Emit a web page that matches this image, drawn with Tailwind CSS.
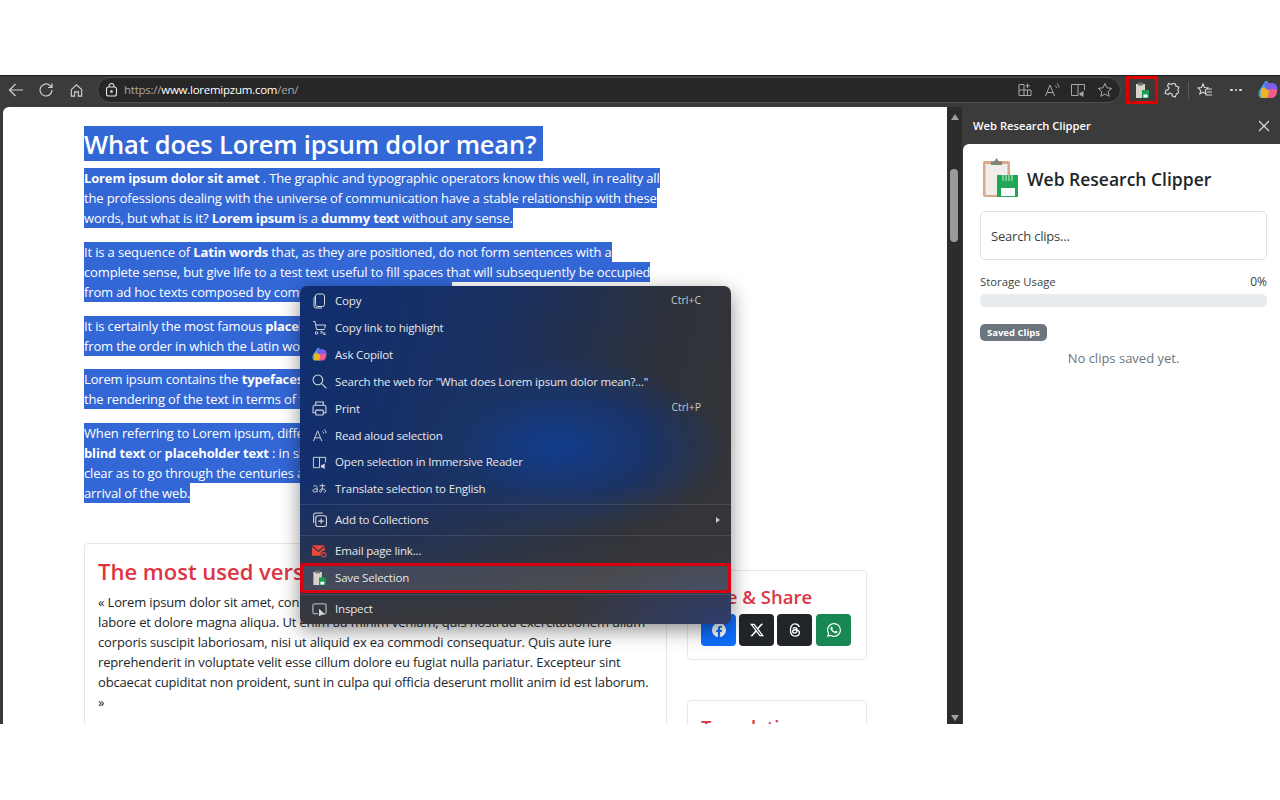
<!DOCTYPE html>
<html lang="en">
<head>
  <meta charset="UTF-8">
  <title>Web Research Clipper</title>
  <script src="https://cdn.jsdelivr.net/npm/@tailwindcss/browser@4"></script>
</head>
<body class="bg-white font-['Open_Sans','Noto_Sans',sans-serif] h-[800px] overflow-hidden">

  <!-- browser window -->
  <div class="mt-[75px] h-[649px] bg-[#3b3b3b] flex flex-col relative overflow-hidden">

    <!-- toolbar -->
    <div class="h-[32px] shrink-0 flex items-center pb-[3px] border-t border-[#1c1c1c] text-[#d0d0d0]">
      <div class="w-[97px] flex items-center pl-[8px] shrink-0">
        <svg class="w-[16px] h-[16px]" viewBox="0 0 16 16" fill="none" stroke="currentColor" stroke-width="1.2"><path d="M15 8H1.500M7.500 2 1.500 8l6 6"/></svg>
        <svg class="w-[16px] h-[16px] ml-[14px]" viewBox="0 0 16 16" fill="none" stroke="currentColor" stroke-width="1.2"><path d="M14 8a6 6 0 1 1-2-4.500L14 5.500M14 1.500v4h-4"/></svg>
        <svg class="w-[15px] h-[15px] ml-[15px]" viewBox="0 0 16 16" fill="none" stroke="currentColor" stroke-width="1.2"><path d="M2.500 7 8 2l5.500 5v7H10V9.500H6V14H2.500z"/></svg>
      </div>
      <div class="w-[1024px] h-[26px] rounded-full bg-[#272727] border border-[#4f4f4f] flex items-center pl-[7px] pr-[7px] shrink-0">
        <svg class="w-[13px] h-[14px] mr-[6px]" viewBox="0 0 13 14" fill="none" stroke="#e0e0e0" stroke-width="1.100"><rect x="1.500" y="4" width="10" height="9" rx="2"/><path d="M4 4V3a2.500 2.500 0 0 1 5 0v1"/><circle cx="6.500" cy="8.500" r=".8" fill="#e0e0e0"/></svg>
        <span class="text-[11.500px] text-[#a8a8a8] tracking-[-0.25px]">https://<span class="text-white">www.loremipzum.com</span>/en/</span>
        <div class="ml-auto flex items-center gap-[10.700px] text-[#a8a8a8]">
          <svg class="w-[16px] h-[16px]" viewBox="0 0 16 16" fill="none" stroke="currentColor"><path d="M2 2.500h5v11H2zM7 8H14v5.500H7M2 8h5M10.500 8v5.500M10.500 1.500V6M8.500 3.800h4.500"/></svg>
          <svg class="w-[16px] h-[16px]" viewBox="0 0 16 16" fill="none" stroke="currentColor"><path d="M1.500 14 6 3l4.500 11M3 10.500h6M11 3.500c1 .6 1.500 1.500 1.500 2.500M13 1.500c1.300 1 2 2.500 2 4"/></svg>
          <svg class="w-[16px] h-[16px]" viewBox="0 0 16 16" fill="none" stroke="currentColor"><path d="M8 13.500H1.500v-11h13V8M8 2.500v11"/><path d="M10 11h1.500l1.500-1.500v5L11.500 13H10z" fill="currentColor"/></svg>
          <svg class="w-[16px] h-[16px]" viewBox="0 0 16 16" fill="none" stroke="currentColor"><path d="m8 1.500 2 4.300 4.700.6-3.500 3.200.9 4.700L8 12l-4.100 2.300.9-4.700L1.300 6.400 6 5.800z"/></svg>
        </div>
      </div>
      <div class="w-[32px] h-[28px] ml-[5px] border-[3px] border-[#e00000] flex items-center justify-center shrink-0">
        <svg class="w-[15px] h-[17px]" viewBox="0 0 15 17"><rect x="1" y="2" width="9" height="14" fill="#d8d2c8"/><rect x="3" y="0.500" width="5" height="3" fill="#6f6f6f"/><path d="M7 8h7v8H7z" fill="#1f9d55"/><rect x="8.500" y="12.500" width="4" height="3" fill="#fff"/></svg>
      </div>
      <div class="flex items-center ml-[6px] text-[#d8d8d8]">
        <svg class="w-[16px] h-[16px]" viewBox="0 0 16 16" fill="none" stroke="currentColor" stroke-width="1.100"><path d="M6 3a2 2 0 0 1 4 0h3.500v3.200a2 2 0 0 1 0 3.800v3.500H10a2 2 0 0 0-4 0H2.500V10a2 2 0 0 0 0-4V3z" transform="rotate(20 8 8)"/></svg>
        <div class="w-px h-[17px] bg-[#5a5a5a] ml-[8px]"></div>
        <svg class="w-[16px] h-[16px] ml-[8px]" viewBox="0 0 16 16" fill="none" stroke="currentColor" stroke-width="1.100"><path d="M6 2l1.500 3.500 3.500.4-2.700 2.500.8 3.600L6 10.200 2.900 12l.8-3.600L1 5.900l3.500-.4zM10.500 7H15M10 10h5M8.500 13H15"/></svg>
        <div class="ml-[17px] flex gap-[2px]">
          <span class="w-[2.500px] h-[2.500px] rounded-full bg-[#e0e0e0]"></span><span class="w-[2.500px] h-[2.500px] rounded-full bg-[#e0e0e0]"></span><span class="w-[2.500px] h-[2.500px] rounded-full bg-[#e0e0e0]"></span>
        </div>
        <svg class="w-[20px] h-[20px] ml-[16px]" viewBox="0 0 20 20"><path d="M7 1.500c2-1 3.500 0 3 2L7 15c-.6 2.500-2 3.500-4 3C.5 17 0 14 1 11z" fill="#38a6e8"/><path d="M6 3h8c3 0 5.500 2 5.500 6 0 2-1.500 2.500-3 2.500H9z" fill="#7d5ee8"/><path d="M3 10c0-2 2-3 3.500-2L12 11l-1 7H5c-1.500 0-2.500-1-2.500-3z" fill="#f0b323"/><path d="M11 9h5.500c2 0 3 1 2.500 3-.6 3.500-2.500 6-5 6H8c2 0 2.500-2 3-9z" fill="#ec5f8c"/></svg>
      </div>
    </div>

    <!-- content area -->
    <div class="flex flex-1 min-h-0">
      <!-- web page -->
      <div class="ml-[3px] w-[944px] bg-white rounded-tl-[6px] overflow-hidden pl-[81px] pt-[19px] text-[13px] leading-[20px] tracking-[-0.15px] text-[#212529] shrink-0 whitespace-nowrap">
        <div class="w-fit h-[35px] bg-[#3367d6] text-white text-[25.500px] leading-[37px] tracking-[-0.2px] font-[550] pr-[7px]">What does Lorem ipsum dolor mean?</div>

        <div class="mt-[7px] text-white">
          <div class="w-fit bg-[#3367d6]"><b>Lorem ipsum dolor sit amet</b> . The graphic and typographic operators know this well, in reality all</div>
          <div class="w-fit bg-[#3367d6]">the professions dealing with the universe of communication have a stable relationship with these</div>
          <div class="w-fit bg-[#3367d6]">words, but what is it? <b>Lorem ipsum</b> is a <b>dummy text</b> without any sense.</div>
        </div>
        <div class="mt-[14px] text-white">
          <div class="w-fit bg-[#3367d6]">It is a sequence of <b>Latin words</b> that, as they are positioned, do not form sentences with a</div>
          <div class="w-fit bg-[#3367d6]">complete sense, but give life to a test text useful to fill spaces that will subsequently be occupied</div>
          <div class="w-fit bg-[#3367d6]">from ad hoc texts composed by communication professionals.</div>
        </div>
        <div class="mt-[14px] text-white">
          <div class="w-fit bg-[#3367d6]">It is certainly the most famous <b>placeholder</b> text even if there are different versions</div>
          <div class="w-fit bg-[#3367d6]">from the order in which the Latin words are repeated.</div>
        </div>
        <div class="mt-[13px] text-white">
          <div class="w-fit bg-[#3367d6]">Lorem ipsum contains the <b>typefaces</b> more in use, an aspect that allows you to have</div>
          <div class="w-fit bg-[#3367d6]">the rendering of the text in terms of font choice and font size.</div>
        </div>
        <div class="mt-[14px] text-white">
          <div class="w-fit bg-[#3367d6]">When referring to Lorem ipsum, different expressions are used, namely fill text ,</div>
          <div class="w-fit bg-[#3367d6]"><b>blind text</b> or <b>placeholder text</b> : in short, its meaning can also be zero, but its</div>
          <div class="w-fit bg-[#3367d6]">clear as to go through the centuries and resist the ironic and modern versions</div>
          <div class="w-fit bg-[#3367d6]">arrival of the web.</div>
        </div>

        <!-- lower cards -->
        <div class="mt-[40px] flex items-start gap-[20px]">
          <div class="w-[583px] shrink-0 border border-[#e5e7eb] rounded-[4px] px-[13px] pt-[11px] pb-[20px]">
            <h2 class="text-[#dc3545] text-[22px] leading-[32px] tracking-normal font-[550]">The most used versions of Lorem ipsum</h2>
            <p class="mt-[5px]">« Lorem ipsum dolor sit amet, consectetur adipiscing elit, sed do eiusmod tempor incididunt ut<br>labore et dolore magna aliqua. Ut enim ad minim veniam, quis nostrud exercitationem ullam<br>corporis suscipit laboriosam, nisi ut aliquid ex ea commodi consequatur. Quis aute iure<br>reprehenderit in voluptate velit esse cillum dolore eu fugiat nulla pariatur. Excepteur sint<br>obcaecat cupiditat non proident, sunt in culpa qui officia deserunt mollit anim id est laborum.<br>»</p>
          </div>
          <div class="w-[180px] shrink-0 mt-[27px]">
            <div class="h-[90px] border border-[#e5e7eb] rounded-[4px] px-[13px] pt-[11px]">
              <h2 class="text-[#dc3545] text-[18.500px] leading-[30px] tracking-normal font-[550]">Like &amp; Share</h2>
              <div class="mt-[2px] flex gap-[3px]">
                <div class="w-[35px] h-[32px] rounded-[4px] bg-[#0d6efd] flex items-center justify-center"><svg class="w-[14px] h-[14px]" viewBox="0 0 16 16" fill="#fff"><path d="M16 8.049c0-4.446-3.582-8.05-8-8.05C3.58 0-.002 3.603-.002 8.05c0 4.017 2.926 7.347 6.750 7.951v-5.625h-2.030V8.050H6.750V6.275c0-2.017 1.195-3.131 3.022-3.131.876 0 1.791.157 1.791.157v1.980h-1.009c-.993 0-1.303.621-1.303 1.258v1.510h2.218l-.354 2.326H9.250V16c3.824-.604 6.750-3.934 6.750-7.951z"/></svg></div>
                <div class="w-[35px] h-[32px] rounded-[4px] bg-[#212529] flex items-center justify-center"><svg class="w-[14px] h-[14px]" viewBox="0 0 16 16" fill="#fff"><path d="M12.600.750h2.454l-5.360 6.142L16 15.250h-4.937l-3.867-5.070-4.425 5.070H.316l5.733-6.570L0 .750h5.063l3.495 4.633L12.601.750Zm-.860 13.028h1.360L4.323 2.145H2.865z"/></svg></div>
                <div class="w-[35px] h-[32px] rounded-[4px] bg-[#212529] flex items-center justify-center"><svg class="w-[14px] h-[14px]" viewBox="0 0 16 16" fill="none" stroke="#fff" stroke-width="1.500"><path d="M13 4.500C12 2 10.300 1 8 1 4.500 1 2.800 3.700 2.800 8s1.700 7 5.200 7c3 0 5-1.600 5-3.800 0-2.400-2.200-3.500-4.800-3.500-1.800 0-2.900.8-2.900 2 0 1.100 1 1.800 2.300 1.800 1.800 0 2.800-1.200 2.800-3.200 0-1.800-.9-3-2.500-3-1 0-1.700.4-2.200 1.100"/></svg></div>
                <div class="w-[35px] h-[32px] ml-[1px] rounded-[4px] bg-[#198754] flex items-center justify-center"><svg class="w-[14px] h-[14px]" viewBox="0 0 16 16" fill="#fff"><path d="M13.601 2.326A7.850 7.850 0 0 0 7.994 0C3.627 0 .068 3.558.064 7.926c0 1.399.366 2.760 1.057 3.965L0 16l4.204-1.102a7.900 7.900 0 0 0 3.790.965h.004c4.368 0 7.926-3.558 7.930-7.930A7.900 7.900 0 0 0 13.600 2.326zM7.994 14.521a6.600 6.600 0 0 1-3.356-.920l-.240-.144-2.494.654.666-2.433-.156-.251a6.560 6.560 0 0 1-1.007-3.505c0-3.626 2.957-6.584 6.591-6.584a6.560 6.560 0 0 1 4.660 1.931 6.560 6.560 0 0 1 1.928 4.660c-.004 3.639-2.961 6.592-6.592 6.592m3.615-4.934c-.197-.099-1.170-.578-1.353-.646-.182-.065-.315-.099-.445.099-.133.197-.513.646-.627.775-.114.133-.232.148-.430.050-.197-.100-.836-.308-1.592-.985-.590-.525-.985-1.175-1.103-1.372-.114-.198-.011-.304.088-.403.087-.088.197-.232.296-.346.100-.114.133-.198.198-.330.065-.134.034-.248-.015-.347-.050-.099-.445-1.076-.612-1.470-.160-.389-.323-.335-.445-.340-.114-.007-.247-.007-.380-.007a.730.730 0 0 0-.529.247c-.182.198-.691.677-.691 1.654s.710 1.916.810 2.049c.098.133 1.394 2.132 3.383 2.992.470.205.840.326 1.129.418.475.152.904.129 1.246.080.380-.058 1.171-.480 1.338-.943.164-.464.164-.860.114-.943-.049-.084-.182-.133-.380-.232z"/></svg></div>
              </div>
            </div>
            <div class="mt-[40px] h-[100px] border border-[#e5e7eb] rounded-[4px] px-[13px] pt-[11px]">
              <h2 class="text-[#dc3545] text-[18.500px] leading-[30px] tracking-normal font-[550]">Translations</h2>
            </div>
          </div>
        </div>
      </div>

      <!-- scrollbar -->
      <div class="w-[15px] shrink-0 bg-[#2c2c2c] relative flex flex-col items-center justify-between pt-[7px] pb-[3px]">
        <div class="w-0 h-0 border-x-[4px] border-x-transparent border-b-[6px] border-b-[#a0a0a0]"></div>
        <div class="absolute top-[62px] left-[3px] w-[8px] h-[73px] rounded-full bg-[#9a9a9a]"></div>
        <div class="w-0 h-0 border-x-[4px] border-x-transparent border-t-[6px] border-t-[#a0a0a0]"></div>
      </div>

      <!-- sidebar -->
      <div class="flex-1 flex flex-col min-w-0">
        <div class="h-[37px] shrink-0 flex items-center justify-between pl-[11px] pr-[10px] text-white">
          <span class="text-[11.200px] font-semibold mt-[1px]">Web Research Clipper</span>
          <svg class="w-[12px] h-[12px]" viewBox="0 0 12 12" stroke="#e0e0e0" stroke-width="1.100"><path d="M1 1l10 10M11 1 1 11"/></svg>
        </div>
        <div class="flex-1 bg-white ml-px rounded-tl-[6px] pl-[17px] pr-[13px] pt-[14px] text-[#212529]">
          <div class="flex items-center h-[42px]">
            <svg class="w-[40px] h-[42px] shrink-0" viewBox="0 0 40 42">
              <rect x="3" y="3" width="27" height="36" rx="2" fill="#d9a98b"/>
              <rect x="5.500" y="6" width="22" height="31" fill="#efeeea"/>
              <path d="M11 7V3.500h3L16.500 0 19 3.500h3V7z" fill="#85857d"/>
              <path d="M17 17h21v22H17z" fill="#21a656"/>
              <path d="M23 17v6M26 17v6M29 17v6M32 17v6" stroke="#c9ecd6" stroke-width="1"/>
              <rect x="21" y="30" width="14" height="8" fill="#fff"/>
            </svg>
            <h1 class="text-[17.500px] font-semibold ml-[7px] text-[#212529]">Web Research Clipper</h1>
          </div>
          <input type="text" placeholder="Search clips..." class="mt-[11px] block w-full h-[49px] border border-[#dee2e6] rounded-[5px] px-[10px] text-[13px] tracking-[-0.2px] placeholder:text-[#3a3f44] bg-white">
          <div class="mt-[13px] flex justify-between text-[11.300px] leading-[18px] text-[#3a3f44]"><span>Storage Usage</span><span class="text-[12px]">0%</span></div>
          <div class="mt-[3px] h-[13px] rounded-[5px] bg-[#e9ecef]"></div>
          <div class="mt-[17px] w-fit h-[17px] px-[7px] rounded-[5px] bg-[#6c757d] text-white text-[9.500px] leading-[17px] font-bold">Saved Clips</div>
          <div class="mt-[8px] text-center text-[13px] leading-[18px] text-[#6c757d]">No clips saved yet.</div>
        </div>
      </div>
    </div>

    <!-- context menu -->
    <div class="absolute left-[300px] top-[211px] w-[431px] h-[338px] rounded-[7px] overflow-hidden shadow-[0_6px_20px_rgba(0,0,0,0.45)] bg-[radial-gradient(ellipse_170px_90px_at_255px_160px,#123c8c_0%,#1a3468_55%,transparent_100%),linear-gradient(105deg,#102f70_0%,#1a3060_40%,#2f3239_75%,#35363a_100%)] text-[11.500px] tracking-[-0.17px] text-[#e8e8e8]">
      <div class="absolute inset-x-0 bottom-0 h-[140px] bg-linear-to-b from-transparent to-[#38383a]"></div>
      <div class="absolute inset-0 bg-[radial-gradient(ellipse_170px_70px_at_100%_100%,#2f3d6e_0%,transparent_100%)]"></div>
      <div class="relative pt-[1.500px]">
        <div class="h-[26.860px] flex items-center pl-[12px] pr-[30px]"><svg class="w-[15px] h-[16px] mr-[8px]" viewBox="0 0 14 16" fill="none" stroke="#d8d8d8"><rect x="3" y="1" width="9" height="12.500" rx="2"/><path d="M3 3.500A2 2 0 0 0 1.500 5.500V13a2 2 0 0 0 2 2h6"/></svg><span>Copy</span><span class="ml-auto text-[10.500px] tracking-normal text-[#c8c8c8]">Ctrl+C</span></div>
        <div class="h-[26.860px] flex items-center pl-[12px] pr-[30px]"><svg class="w-[15px] h-[16px] mr-[8px]" viewBox="0 0 14 16" fill="none" stroke="#d8d8d8"><path d="M.5 1.500h2l1.500 8h8M3 5h10l-1 3.500"/><circle cx="4" cy="13" r="1.300"/><path d="M8 13h5M8 11.500h2M11 14.500h2"/></svg><span>Copy link to highlight</span></div>
        <div class="h-[26.860px] flex items-center pl-[12px] pr-[30px]"><svg class="w-[15px] h-[15px] mr-[8px]" viewBox="0 0 20 20"><path d="M7 1.500c2-1 3.500 0 3 2L7 15c-.6 2.500-2 3.500-4 3C.5 17 0 14 1 11z" fill="#38a6e8"/><path d="M6 3h8c3 0 5.500 2 5.500 6 0 2-1.500 2.500-3 2.500H9z" fill="#7d5ee8"/><path d="M3 10c0-2 2-3 3.500-2L12 11l-1 7H5c-1.500 0-2.500-1-2.500-3z" fill="#f0b323"/><path d="M11 9h5.500c2 0 3 1 2.500 3-.6 3.500-2.500 6-5 6H8c2 0 2.500-2 3-9z" fill="#ec5f8c"/></svg><span>Ask Copilot</span></div>
        <div class="h-[26.860px] flex items-center pl-[12px] pr-[30px]"><svg class="w-[15px] h-[15px] mr-[8px]" viewBox="0 0 14 14" fill="none" stroke="#d8d8d8"><circle cx="5.500" cy="5.500" r="4.500"/><path d="m9 9 4.500 4.500"/></svg><span>Search the web for "What does Lorem ipsum dolor mean?..."</span></div>
        <div class="h-[26.860px] flex items-center pl-[12px] pr-[30px]"><svg class="w-[15px] h-[15px] mr-[8px]" viewBox="0 0 14 14" fill="none" stroke="#d8d8d8"><path d="M3.500 4V1h7v3M3.500 11H1V5.500A1.500 1.500 0 0 1 2.500 4h9A1.500 1.500 0 0 1 13 5.500V11h-2.500"/><rect x="3.500" y="8.500" width="7" height="4.500" rx=".5"/></svg><span>Print</span><span class="ml-auto text-[10.500px] tracking-normal text-[#c8c8c8]">Ctrl+P</span></div>
        <div class="h-[26.860px] flex items-center pl-[12px] pr-[30px]"><svg class="w-[15px] h-[15px] mr-[8px]" viewBox="0 0 16 16" fill="none" stroke="#d8d8d8"><path d="M1.500 14 6 3l4.500 11M3 10.500h6M11 3.500c1 .6 1.500 1.500 1.500 2.500M13 1.500c1.300 1 2 2.500 2 4"/></svg><span>Read aloud selection</span></div>
        <div class="h-[26.860px] flex items-center pl-[12px] pr-[30px]"><svg class="w-[15px] h-[15px] mr-[8px]" viewBox="0 0 16 16" fill="none" stroke="#d8d8d8"><path d="M8 13.500H1.500v-11h13V8M8 2.500v11"/><path d="M10 11h1.500l1.500-1.500v5L11.500 13H10z" fill="#d8d8d8"/></svg><span>Open selection in Immersive Reader</span></div>
        <div class="h-[26.860px] flex items-center pl-[12px] pr-[30px]"><svg class="w-[15px] h-[15px] mr-[8px]" viewBox="0 0 16 16" fill="none" stroke="#d8d8d8"><path d="M1.500 5.500C3 4.500 5.500 5 5.500 7v5M5.500 8.500C2.500 8 1 9 1 10.500c0 1.800 3 2 4.500 0M8 5h6M11 3v4c0 3-1 5-2 5-1.500 0-1-3 1.500-3.500 2-.4 4 .5 4 2 0 1-1 1.500-2 1.500"/></svg><span>Translate selection to English</span></div>
        <div class="h-px bg-white/10 my-[1.500px]"></div>
        <div class="h-[26.860px] flex items-center pl-[12px] pr-[11px]"><svg class="w-[15px] h-[15px] mr-[8px]" viewBox="0 0 14 14" fill="none" stroke="#d8d8d8"><rect x="3.500" y="3.500" width="10" height="10" rx="2"/><path d="M8.500 6v5M6 8.500h5M1.500 10V3A2 2 0 0 1 3.500 1H10"/></svg><span>Add to Collections</span><span class="ml-auto w-0 h-0 border-y-[3.500px] border-y-transparent border-l-[4px] border-l-[#c8c8c8]"></span></div>
        <div class="h-px bg-white/10 my-[1.500px]"></div>
        <div class="h-[26.860px] flex items-center pl-[12px] pr-[30px]"><svg class="w-[15px] h-[15px] mr-[8px]" viewBox="0 0 14 14"><path d="M0 2h12L6 7z" fill="#e8483a"/><path d="M0 3.500 6 8.500l6-5V7a4 4 0 0 0-4 5H0z" fill="#e8483a"/><circle cx="11" cy="11" r="2" fill="none" stroke="#e8483a"/></svg><span>Email page link...</span></div>
        <div class="h-[30px] -mt-[1.500px] flex items-center pl-[9px] pr-[30px] border-[3px] border-[#d80010] bg-white/10 rounded-[2px]"><svg class="w-[15px] h-[16px] mr-[8px]" viewBox="0 0 15 17"><rect x="1" y="2" width="9" height="14" fill="#d8d2c8"/><rect x="3" y="0.500" width="5" height="3" fill="#6f6f6f"/><path d="M7 8h7v8H7z" fill="#1f9d55"/><rect x="8.500" y="12.500" width="4" height="3" fill="#fff"/></svg><span>Save Selection</span></div>
        <div class="h-px bg-white/10 mt-[1px] mb-[1px]"></div>
        <div class="h-[26.860px] flex items-center pl-[12px] pr-[30px]"><svg class="w-[15px] h-[15px] mr-[8px]" viewBox="0 0 16 16" fill="none" stroke="#d8d8d8"><path d="M6.500 12.500H2A1 1 0 0 1 1 11.500V3a1 1 0 0 1 1-1h12a1 1 0 0 1 1 1v8.500a1 1 0 0 1-1 1h-1"/><path d="M8 8v7l2-2h3z" fill="#d8d8d8"/></svg><span>Inspect</span></div>
      </div>
    </div>
  </div>
</body>
</html>
